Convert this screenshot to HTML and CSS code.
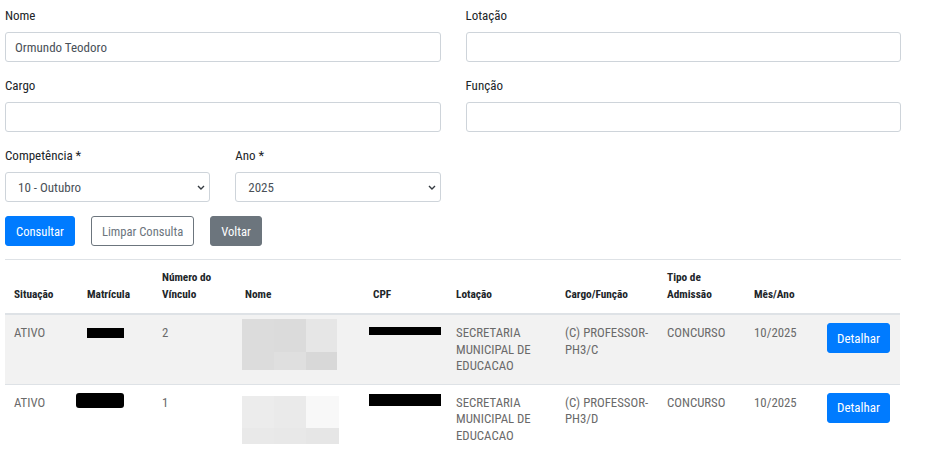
FILE: index.html
```html
<!DOCTYPE html>
<html lang="pt-BR">
<head>
<meta charset="utf-8">
<title>Consulta de Vínculos</title>
<link rel="stylesheet" href="styles.css">
</head>
<body>
<main class="page">
  <form class="filters">
    <div class="row two">
      <div class="field">
        <label class="label">Nome</label>
        <input class="control" type="text" value="Ormundo Teodoro">
      </div>
      <div class="field">
        <label class="label">Lotação</label>
        <input class="control" type="text">
      </div>
    </div>
    <div class="row two">
      <div class="field">
        <label class="label">Cargo</label>
        <input class="control" type="text">
      </div>
      <div class="field">
        <label class="label">Função</label>
        <input class="control" type="text">
      </div>
    </div>
    <div class="row four">
      <div class="field">
        <label class="label">Competência *</label>
        <div class="select-wrap">
          <select class="control select">
            <option>10 - Outubro</option>
          </select>
          <svg class="chevron" width="8" height="5" viewBox="0 0 8 5"><path d="M1 1l3 3 3-3" fill="none" stroke="#343a40" stroke-width="1.4"/></svg>
        </div>
      </div>
      <div class="field">
        <label class="label">Ano *</label>
        <div class="select-wrap">
          <select class="control select">
            <option>2025</option>
          </select>
          <svg class="chevron" width="8" height="5" viewBox="0 0 8 5"><path d="M1 1l3 3 3-3" fill="none" stroke="#343a40" stroke-width="1.4"/></svg>
        </div>
      </div>
    </div>
    <div class="actions">
      <button type="button" class="btn btn-primary">Consultar</button>
      <button type="button" class="btn btn-outline">Limpar Consulta</button>
      <button type="button" class="btn btn-secondary">Voltar</button>
    </div>
  </form>

  <table class="results">
    <colgroup>
      <col class="c-sit"><col class="c-mat"><col class="c-num"><col class="c-nome"><col class="c-cpf">
      <col class="c-lot"><col class="c-cargo"><col class="c-tipo"><col class="c-mes"><col class="c-act">
    </colgroup>
    <thead>
      <tr>
        <th>Situação</th>
        <th>Matrícula</th>
        <th>Número do<br>Vínculo</th>
        <th>Nome</th>
        <th>CPF</th>
        <th>Lotação</th>
        <th>Cargo/Função</th>
        <th>Tipo de<br>Admissão</th>
        <th>Mês/Ano</th>
        <th></th>
      </tr>
    </thead>
    <tbody>
      <tr class="striped">
        <td>ATIVO</td>
        <td><span class="redact r-mat1"></span></td>
        <td>2</td>
        <td><span class="blurred b1"><i></i><i></i><i></i><i></i><i></i><i></i></span></td>
        <td><span class="redact r-cpf1"></span></td>
        <td>SECRETARIA MUNICIPAL DE EDUCACAO</td>
        <td>(C) PROFESSOR-PH3/C</td>
        <td>CONCURSO</td>
        <td>10/2025</td>
        <td class="act"><button type="button" class="btn btn-primary btn-detail">Detalhar</button></td>
      </tr>
      <tr>
        <td>ATIVO</td>
        <td><span class="redact r-mat2"></span></td>
        <td>1</td>
        <td><span class="blurred b2"><i></i><i></i><i></i><i></i><i></i><i></i></span></td>
        <td><span class="redact r-cpf2"></span></td>
        <td>SECRETARIA MUNICIPAL DE EDUCACAO</td>
        <td>(C) PROFESSOR-PH3/D</td>
        <td>CONCURSO</td>
        <td>10/2025</td>
        <td class="act"><button type="button" class="btn btn-primary btn-detail">Detalhar</button></td>
      </tr>
    </tbody>
  </table>
</main>
</body>
</html>
```

FILE: styles.css
```css
* { box-sizing: border-box; }

body {
  margin: 0;
  background: #fff;
  font-family: Roboto, "Noto Sans", sans-serif;
  font-stretch: 75%;
  color: #212529;
  font-size: 13px;
}

.page {
  width: 896px;
  margin-left: 5px;
  padding-top: 8px;
}

.row {
  display: grid;
  column-gap: 25px;
  margin-bottom: 16px;
}
.row.two { grid-template-columns: 1fr 1fr; }
.row.four { grid-template-columns: 1fr 1fr 1fr 1fr; margin-bottom: 14px; }

.field { display: flex; flex-direction: column; }

.label {
  font-size: 13px;
  line-height: 16px;
  margin-bottom: 8px;
  color: #212529;
}

.control {
  display: block;
  height: 30px;
  width: 100%;
  border: 1px solid #ced4da;
  border-radius: 3px;
  padding: 0 9px;
  font-family: inherit;
  font-stretch: inherit;
  font-size: 13px;
  color: #495057;
  background: #fff;
}

.select-wrap { position: relative; }
.select {
  appearance: none;
  -webkit-appearance: none;
  padding-left: 12px;
}
.chevron {
  position: absolute;
  right: 5px;
  top: 13px;
  pointer-events: none;
}

.actions {
  display: flex;
  gap: 16px;
  padding-bottom: 13px;
  border-bottom: 1px solid #dee2e6;
}

.btn {
  height: 30px;
  border-radius: 3px;
  font-family: inherit;
  font-stretch: inherit;
  font-size: 12.6px;
  padding: 0 10px;
  border: 1px solid transparent;
  cursor: pointer;
}
.btn-primary { background: #007bff; border-color: #007bff; color: #fff; }
.btn-outline { background: #fff; border-color: #6c757d; color: #6c757d; }
.btn-secondary { background: #6c757d; border-color: #6c757d; color: #fff; }

.results {
  width: 895px;
  table-layout: fixed;
  border-collapse: collapse;
  font-size: 13px;
}

.c-sit { width: 73px; }
.c-mat { width: 75px; }
.c-num { width: 83px; }
.c-nome { width: 128px; }
.c-cpf { width: 83px; }
.c-lot { width: 109px; }
.c-cargo { width: 102px; }
.c-tipo { width: 87px; }
.c-mes { width: 73px; }
.c-act { width: 82px; }

.results th {
  text-align: left;
  vertical-align: bottom;
  font-size: 11.3px;
  font-weight: 700;
  line-height: 17px;
  padding: 9px 9px 10px;
  color: #212529;
  border-bottom: 2px solid #dee2e6;
}

.results td {
  vertical-align: top;
  font-size: 12.8px;
  color: #6a6a6a;
  line-height: 16.5px;
  padding: 10px 9px 9px;
  border-top: 1px solid #dee2e6;
}

.results tr.striped td { background: #f2f2f2; }

.results td.act { padding-top: 8px; }

.btn-detail { height: 30px; padding: 0 9px; font-size: 13px; }

.redact { display: block; background: #000; }
.r-mat1 { width: 37px; height: 10px; margin-top: 3px; }
.r-mat2 { width: 48px; height: 15px; margin-left: -11px; border-radius: 3px; margin-top: -2px; }
.r-cpf1 { width: 72px; height: 8px; margin-left: -4px; margin-top: 2px; }
.r-cpf2 { width: 72px; height: 12px; margin-left: -4px; margin-top: -1px; }

.blurred {
  display: grid;
  grid-template-columns: 32px 32px 31px;
  grid-template-rows: 33px 18px;
  margin-left: -3px;
  width: 95px;
}
.blurred i { display: block; }
.b1 { margin-top: -6px; }
.b1 i:nth-child(1) { background: #dcdcdc; }
.b1 i:nth-child(2) { background: #dbdbdb; }
.b1 i:nth-child(3) { background: #e6e6e6; }
.b1 i:nth-child(4) { background: #dcdcdc; }
.b1 i:nth-child(5) { background: #dfdfdf; }
.b1 i:nth-child(6) { background: #d8d8d8; }
.b2 { margin-top: 1px; grid-template-rows: 32px 16px; width: 97px; grid-template-columns: 32px 32px 33px; }
.b2 i:nth-child(1) { background: #ececec; }
.b2 i:nth-child(2) { background: #eaeaea; }
.b2 i:nth-child(3) { background: #f8f8f8; }
.b2 i:nth-child(4) { background: #e9e9e9; }
.b2 i:nth-child(5) { background: #e8e8e8; }
.b2 i:nth-child(6) { background: #e6e6e6; }
```
